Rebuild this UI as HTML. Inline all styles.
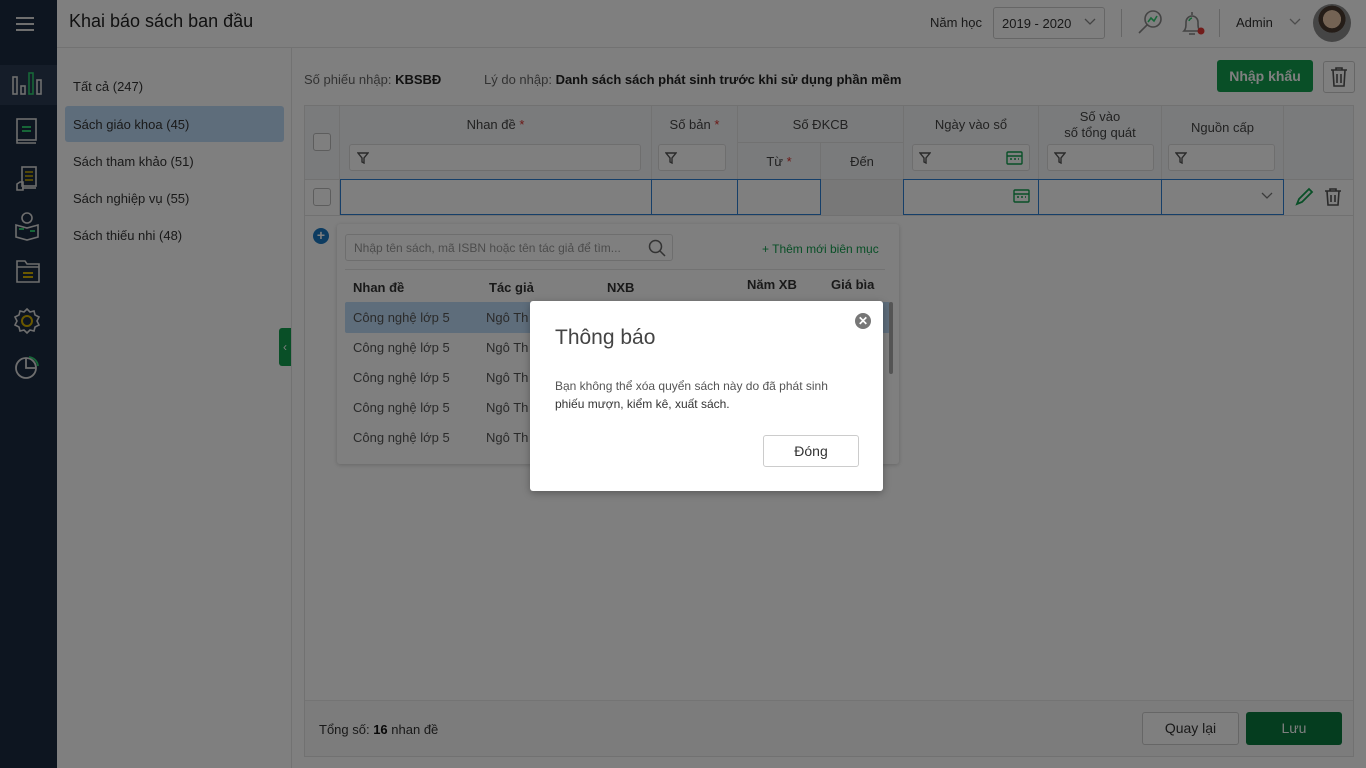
<!DOCTYPE html>
<html><head><meta charset="utf-8">
<style>
*{box-sizing:border-box;margin:0;padding:0}
body{width:1366px;height:768px;overflow:hidden;position:relative;font-family:"Liberation Sans",sans-serif;font-size:13px;color:#333;background:#fff}
.a{position:absolute}
.sb{left:0;top:0;width:57px;height:768px;background:#1a2a40}
.hdr{left:57px;top:0;width:1309px;height:48px;background:#fff;border-bottom:1px solid #e4e4e4}
.inp{border:1px solid #ddd;border-radius:3px;background:#fff}
.th{color:#444;font-size:13px;text-align:center}
.ov{left:0;top:0;width:1366px;height:768px;background:rgba(0,0,0,0.5)}
.red{color:#d9302c}
.cell{border:1px solid #2d7fd3;background:#fff}
.vl{background:#e5e5e5;width:1px}
.row{left:345px;width:240px;height:30px;line-height:30px;font-size:13px;color:#555;padding-left:8px}
.fi{position:absolute}
</style></head><body>
<div class="a sb"></div>
<div class="a" style="left:0;top:65px;width:57px;height:40px;background:#2a3a52"></div>
<svg class="a" style="left:14px;top:14px" width="22" height="20"><path d="M2 4h18M2 10h18M2 16h18" stroke="#ddd" stroke-width="2"/></svg>
<svg class="a" style="left:10px;top:70px" width="34" height="30" fill="none" stroke="#ddd" stroke-width="1.6"><rect x="3" y="7" width="4" height="17"/><rect x="11" y="16" width="4" height="8"/><rect x="19" y="3" width="4" height="21" stroke="#2ecc71"/><rect x="27" y="10" width="4" height="14"/></svg>
<svg class="a" style="left:14px;top:117px" width="26" height="28" fill="none" stroke="#ddd" stroke-width="1.6"><rect x="3" y="2" width="19" height="21"/><path d="M3 23v3h19" /><path d="M8 10h9M8 14h9" stroke="#2ecc71" stroke-width="2"/></svg>
<svg class="a" style="left:14px;top:164px" width="26" height="30" fill="none" stroke="#ddd" stroke-width="1.6"><rect x="8" y="3" width="14" height="19"/><path d="M11 8h8M11 12h8M11 16h8" stroke="#d4b000"/><path d="M3 20v6h6v-8h-3z"/><path d="M8 24h14"/></svg>
<svg class="a" style="left:13px;top:211px" width="28" height="30" fill="none" stroke="#ddd" stroke-width="1.6"><circle cx="14" cy="7" r="5"/><path d="M3 14l11 3 11-3v12l-11 3-11-3z"/><path d="M6 18h5M17 20h5" stroke="#2ecc71" stroke-width="2"/></svg>
<svg class="a" style="left:15px;top:258px" width="26" height="26" fill="none" stroke="#ddd" stroke-width="1.6"><path d="M2 3h8l2 3h12v18H2z"/><path d="M2 9h22"/><path d="M8 15h10M8 19h10" stroke="#d4b000" stroke-width="2"/></svg>
<svg class="a" style="left:13px;top:307px" width="28" height="28" fill="none" stroke="#ddd" stroke-width="1.6"><path d="M14 2l3 3 4-1 1 4 4 2-2 4 2 4-4 2-1 4-4-1-3 3-3-3-4 1-1-4-4-2 2-4-2-4 4-2 1-4 4 1z"/><circle cx="14" cy="14" r="5" stroke="#d4b000" stroke-width="2"/></svg>
<svg class="a" style="left:14px;top:354px" width="26" height="26" fill="none" stroke="#ddd" stroke-width="1.8"><circle cx="12" cy="14" r="10"/><path d="M12 4v10h10"/><path d="M15 3a10 10 0 0 1 9 9" stroke="#2ecc71"/></svg>

<div class="a hdr"></div>
<div class="a" style="left:69px;top:11px;font-size:18px;color:#222">Khai báo sách ban đầu</div>
<div class="a" style="left:930px;top:15px;font-size:13px;color:#333">Năm học</div>
<div class="a inp" style="left:993px;top:7px;width:112px;height:32px;border-color:#ccc;padding:8px 8px;font-size:13px">2019 - 2020</div>
<svg class="a" style="left:1084px;top:18px" width="12" height="8" fill="none" stroke="#888" stroke-width="1.3"><path d="M1 1l5 5 5-5"/></svg>
<div class="a" style="left:1121px;top:9px;width:1px;height:28px;background:#ccc"></div>
<svg class="a" style="left:1136px;top:8px" width="28" height="28" fill="none" stroke="#888" stroke-width="1.6"><circle cx="17" cy="11" r="8"/><path d="M11 17l-8 8"/><path d="M12 14l3-4 3 3 3-5" stroke="#2ecc71"/></svg>
<svg class="a" style="left:1178px;top:8px" width="30" height="30" fill="none" stroke="#888" stroke-width="1.6"><path d="M14 4v3M6 23c2-2 2-5 2-9a6 6 0 0 1 12 0c0 4 0 7 2 9z"/><path d="M11 26h6"/><path d="M11 13a4 4 0 0 1 3-3" stroke="#2ecc71"/><circle cx="23" cy="23" r="3.5" fill="#e53935" stroke="none"/></svg>
<div class="a" style="left:1219px;top:9px;width:1px;height:28px;background:#ccc"></div>
<div class="a" style="left:1236px;top:15px;font-size:13px;color:#333">Admin</div>
<svg class="a" style="left:1289px;top:18px" width="12" height="8" fill="none" stroke="#999" stroke-width="1.3"><path d="M1 1l5 5 5-5"/></svg>
<div class="a" style="left:1313px;top:4px;width:38px;height:38px;border-radius:50%;background:radial-gradient(circle at 50% 40%,#e8c7a8 0 30%,#4a3a30 31% 45%,#8a8a8a 46%)"></div>

<div class="a" style="left:57px;top:48px;width:235px;height:720px;background:#fff;border-right:1px solid #e4e4e4"></div>
<div class="a" style="left:73px;top:79px;font-size:13px">Tất cả (247)</div>
<div class="a" style="left:65px;top:106px;width:219px;height:36px;background:#bddaf6;border-radius:3px"></div>
<div class="a" style="left:73px;top:117px">Sách giáo khoa (45)</div>
<div class="a" style="left:73px;top:154px">Sách tham khảo (51)</div>
<div class="a" style="left:73px;top:191px">Sách nghiệp vụ (55)</div>
<div class="a" style="left:73px;top:228px">Sách thiếu nhi (48)</div>
<div class="a" style="left:279px;top:328px;width:12px;height:38px;background:#129e4e;border-radius:3px 0 0 3px;color:#fff;font-size:12px;line-height:38px;text-align:center">‹</div>

<div class="a" style="left:292px;top:48px;width:1074px;height:720px;background:#fff"></div>
<div class="a" style="left:304px;top:72px;color:#666">Số phiếu nhập: <b style="color:#222">KBSBĐ</b></div>
<div class="a" style="left:484px;top:72px;color:#666">Lý do nhập: <b style="color:#222">Danh sách sách phát sinh trước khi sử dụng phần mềm</b></div>
<div class="a" style="left:1217px;top:60px;width:96px;height:32px;background:#129e4e;border-radius:3px;color:#fff;font-weight:bold;text-align:center;line-height:32px;font-size:14px">Nhập khẩu</div>
<div class="a inp" style="left:1323px;top:61px;width:32px;height:32px;border-color:#ccc"></div>
<svg class="a" style="left:1329px;top:66px" width="20" height="22" fill="none" stroke="#555" stroke-width="1.6"><path d="M2 4h16M7 4V2h6v2M4 4l1 16h10l1-16M8 8v9M12 8v9"/></svg>

<div class="a" style="left:304px;top:105px;width:1050px;height:652px;border:1px solid #e2e2e2;background:#fff"></div>
<div class="a" style="left:305px;top:106px;width:1048px;height:73px;background:#f4f6f8"></div>
<div class="a" style="left:305px;top:179px;width:1048px;height:1px;background:#e2e2e2"></div>
<div class="a" style="left:305px;top:215px;width:1048px;height:1px;background:#e2e2e2"></div>
<div class="a vl" style="left:339px;top:106px;height:109px"></div>
<div class="a vl" style="left:651px;top:106px;height:73px"></div>
<div class="a vl" style="left:737px;top:106px;height:73px"></div>
<div class="a vl" style="left:903px;top:106px;height:73px"></div>
<div class="a vl" style="left:1038px;top:106px;height:73px"></div>
<div class="a vl" style="left:1161px;top:106px;height:73px"></div>
<div class="a vl" style="left:1283px;top:106px;height:73px"></div>
<div class="a vl" style="left:820px;top:142px;height:37px"></div>
<div class="a" style="left:738px;top:142px;width:165px;height:1px;background:#e2e2e2"></div>
<div class="a inp" style="left:313px;top:133px;width:18px;height:18px;border-color:#bbb"></div>
<div class="a inp" style="left:313px;top:188px;width:18px;height:18px;border-color:#bbb"></div>
<div class="a th" style="left:340px;top:117px;width:311px">Nhan đề <span class="red">*</span></div>
<div class="a th" style="left:652px;top:117px;width:85px">Số bản <span class="red">*</span></div>
<div class="a th" style="left:738px;top:117px;width:165px">Số ĐKCB</div>
<div class="a th" style="left:738px;top:154px;width:82px">Từ <span class="red">*</span></div>
<div class="a th" style="left:821px;top:154px;width:82px">Đến</div>
<div class="a th" style="left:904px;top:117px;width:134px">Ngày vào sổ</div>
<div class="a th" style="left:1039px;top:109px;width:122px;line-height:16px">Số vào<br>số tổng quát</div>
<div class="a th" style="left:1162px;top:120px;width:121px">Nguồn cấp</div>
<div class="a inp" style="left:349px;top:144px;width:292px;height:27px"></div>
<div class="a inp" style="left:658px;top:144px;width:68px;height:27px"></div>
<div class="a inp" style="left:912px;top:144px;width:118px;height:27px"></div>
<div class="a inp" style="left:1047px;top:144px;width:107px;height:27px"></div>
<div class="a inp" style="left:1168px;top:144px;width:107px;height:27px"></div>
<svg class="fi" style="left:357px;top:152px" width="12" height="12" fill="none" stroke="#555" stroke-width="1.4"><path d="M1 1h10L7 6v5L5 10V6z"/></svg>
<svg class="fi" style="left:665px;top:152px" width="12" height="12" fill="none" stroke="#555" stroke-width="1.4"><path d="M1 1h10L7 6v5L5 10V6z"/></svg>
<svg class="fi" style="left:919px;top:152px" width="12" height="12" fill="none" stroke="#555" stroke-width="1.4"><path d="M1 1h10L7 6v5L5 10V6z"/></svg>
<svg class="fi" style="left:1054px;top:152px" width="12" height="12" fill="none" stroke="#555" stroke-width="1.4"><path d="M1 1h10L7 6v5L5 10V6z"/></svg>
<svg class="fi" style="left:1175px;top:152px" width="12" height="12" fill="none" stroke="#555" stroke-width="1.4"><path d="M1 1h10L7 6v5L5 10V6z"/></svg>
<svg class="a" style="left:1006px;top:150px" width="17" height="15" fill="none" stroke="#129e4e" stroke-width="1.4"><rect x="1" y="2" width="15" height="12" rx="1"/><path d="M1 6h15M4 9h2M8 9h2M12 9h1"/></svg>
<div class="a cell" style="left:340px;top:179px;width:312px;height:36px"></div>
<div class="a cell" style="left:651px;top:179px;width:87px;height:36px"></div>
<div class="a cell" style="left:737px;top:179px;width:84px;height:36px"></div>
<div class="a" style="left:821px;top:180px;width:82px;height:35px;background:#f0f0f0"></div>
<div class="a cell" style="left:903px;top:179px;width:136px;height:36px"></div>
<div class="a cell" style="left:1038px;top:179px;width:124px;height:36px"></div>
<div class="a cell" style="left:1161px;top:179px;width:123px;height:36px"></div>
<svg class="a" style="left:1013px;top:188px" width="17" height="15" fill="none" stroke="#129e4e" stroke-width="1.4"><rect x="1" y="2" width="15" height="12" rx="1"/><path d="M1 6h15M4 9h2M8 9h2M12 9h1"/></svg>
<svg class="a" style="left:1261px;top:192px" width="12" height="8" fill="none" stroke="#777" stroke-width="1.3"><path d="M1 1l5 5 5-5"/></svg>
<svg class="a" style="left:1294px;top:187px" width="20" height="20" fill="none" stroke="#129e4e" stroke-width="1.8"><path d="M3 17l2-5L15 2l3 3L8 15z"/></svg>
<svg class="a" style="left:1324px;top:187px" width="18" height="20" fill="none" stroke="#555" stroke-width="1.6"><path d="M1 4h16M6 4V2h6v2M3 4l1 14h10l1-14M7 8v7M11 8v7"/></svg>
<div class="a" style="left:313px;top:228px;width:16px;height:16px;border-radius:50%;background:#1a78c2;color:#fff;font-size:14px;line-height:15px;text-align:center;font-weight:bold">+</div>

<div class="a" style="left:337px;top:224px;width:562px;height:240px;background:#fff;box-shadow:0 1px 5px rgba(0,0,0,0.2);border-radius:3px"></div>
<div class="a inp" style="left:345px;top:234px;width:328px;height:27px;color:#999;font-size:12px;padding:6px 8px">Nhập tên sách, mã ISBN hoặc tên tác giả để tìm...</div>
<svg class="a" style="left:648px;top:239px" width="18" height="18" fill="none" stroke="#666" stroke-width="1.5"><circle cx="7.5" cy="7.5" r="6"/><path d="M12 12l5 5"/></svg>
<div class="a" style="left:762px;top:242px;color:#129e4e;font-size:12px">+ Thêm mới biên mục</div>
<div class="a" style="left:345px;top:269px;width:540px;height:1px;background:#e5e5e5"></div>
<div class="a" style="left:353px;top:280px;font-weight:bold;color:#333">Nhan đề</div>
<div class="a" style="left:489px;top:280px;font-weight:bold;color:#333">Tác giả</div>
<div class="a" style="left:607px;top:280px;font-weight:bold;color:#333">NXB</div>
<div class="a" style="left:747px;top:277px;font-weight:bold;color:#333">Năm XB</div>
<div class="a" style="left:831px;top:277px;font-weight:bold;color:#333">Giá bìa</div>
<div class="a" style="left:345px;top:302px;width:545px;height:31px;background:#bddaf6;border-radius:2px"></div>
<div class="a row" style="top:303px">Công nghệ lớp 5<span style="position:absolute;left:141px">Ngô Th</span></div>
<div class="a row" style="top:333px">Công nghệ lớp 5<span style="position:absolute;left:141px">Ngô Th</span></div>
<div class="a row" style="top:363px">Công nghệ lớp 5<span style="position:absolute;left:141px">Ngô Th</span></div>
<div class="a row" style="top:393px">Công nghệ lớp 5<span style="position:absolute;left:141px">Ngô Th</span></div>
<div class="a row" style="top:423px">Công nghệ lớp 5<span style="position:absolute;left:141px">Ngô Th</span></div>
<div class="a" style="left:889px;top:302px;width:4px;height:72px;background:#aaa;border-radius:2px"></div>

<div class="a" style="left:305px;top:700px;width:1048px;height:56px;background:#f8f8f8;border-top:1px solid #e8e8e8"></div>
<div class="a" style="left:319px;top:722px;color:#333">Tổng số: <b style="color:#111">16</b> nhan đề</div>
<div class="a inp" style="left:1142px;top:712px;width:97px;height:33px;border-color:#ccc;text-align:center;line-height:31px;font-size:14px">Quay lại</div>
<div class="a" style="left:1246px;top:712px;width:96px;height:33px;background:#0a7a3e;border-radius:3px;color:#fff;text-align:center;line-height:33px;font-size:14px">Lưu</div>

<div class="a ov"></div>

<div class="a" style="left:530px;top:301px;width:353px;height:190px;background:#fff;border-radius:3px;box-shadow:0 2px 8px rgba(0,0,0,0.3)"></div>
<div class="a" style="left:555px;top:326px;font-size:21px;color:#444">Thông báo</div>
<div class="a" style="left:855px;top:313px;width:16px;height:16px;border-radius:50%;background:#777;color:#fff;font-size:12px;line-height:16px;text-align:center;font-weight:bold">✕</div>
<div class="a" style="left:555px;top:377px;font-size:12px;color:#555;line-height:18px">Bạn không thể xóa quyển sách này do đã phát sinh<br><span style="color:#333">phiếu mượn, kiểm kê, xuất sách.</span></div>
<div class="a" style="left:763px;top:435px;width:96px;height:32px;border:1px solid #ccc;border-radius:3px;text-align:center;line-height:30px;font-size:14px;color:#333;background:#fff">Đóng</div>
</body></html>
